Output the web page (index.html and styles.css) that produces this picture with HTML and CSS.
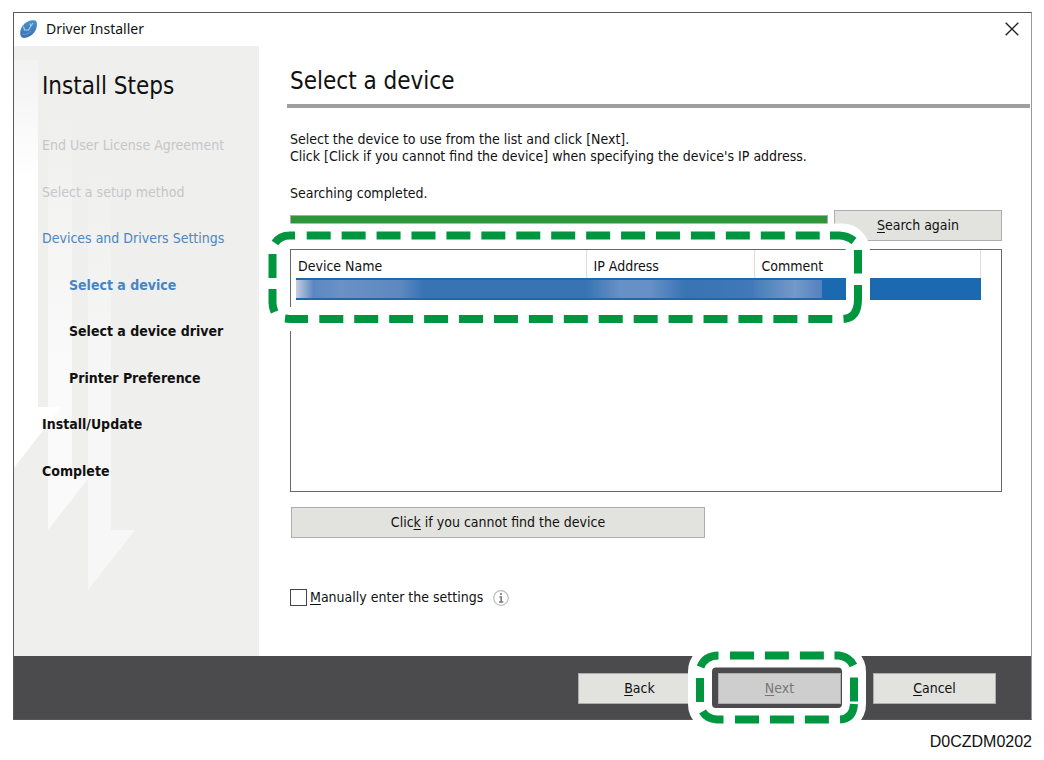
FILE: index.html
```html
<!DOCTYPE html>
<html lang="en">
<head>
<meta charset="utf-8">
<title>Driver Installer</title>
<link rel="stylesheet" href="styles.css">
</head>
<body>
<figure class="figure">
  <div class="window">
    <header class="titlebar">
      <svg class="app-icon" width="20" height="20" viewBox="0 0 20 20" aria-hidden="true">
        <defs><linearGradient id="app" x1="0" y1="0" x2="0" y2="1"><stop offset="0" stop-color="#4692c9"/><stop offset="1" stop-color="#3c6fb8"/></linearGradient></defs>
        <path d="M3 18.500C.500 16.500.600 11 3.500 7C6.500 2.500 12 .700 16 1.500C19 2.500 18.500 9 15.500 13C12.500 17.500 6 20 3 18.500Z" fill="url(#app)"/>
        <path d="M4.500 7.500L5.500 11H9.500L12 7L11 4.500M12 7L14 4" fill="none" stroke="#a9cfea" stroke-width="1.100"/>
        <path d="M3 15Q7 17 12 12" fill="none" stroke="#5f9bd2"/>
      </svg>
      <span class="title">Driver Installer</span>
      <button class="close" type="button" aria-label="Close">
        <svg width="14" height="14" viewBox="0 0 14 14"><path d="M.700.700L13.300 13.300M13.300.700L.700 13.300" stroke="#222" stroke-width="1.400"/></svg>
      </button>
    </header>
    <div class="body">
      <nav class="sidebar">
        <svg class="arrows" width="245" height="610" viewBox="14 46 245 610" aria-hidden="true">
          <defs>
            <linearGradient id="fade1" gradientUnits="userSpaceOnUse" x1="0" y1="60" x2="0" y2="180"><stop offset="0" stop-color="#f2f2f2"/><stop offset="1" stop-color="#fff"/></linearGradient>
            <linearGradient id="fade2" gradientUnits="userSpaceOnUse" x1="0" y1="110" x2="0" y2="360"><stop offset="0" stop-color="#efefee"/><stop offset="1" stop-color="#fafafa"/></linearGradient>
            <linearGradient id="fade3" gradientUnits="userSpaceOnUse" x1="0" y1="160" x2="0" y2="380"><stop offset="0" stop-color="#efefee"/><stop offset="1" stop-color="#f7f7f7"/></linearGradient>
          </defs>
          <path d="M48 110H72V470H95L48 530Z" fill="url(#fade2)"/>
          <path d="M88 160H111V530H135L88 590Z" fill="url(#fade3)"/>
          <path d="M14 60H38V407H61L14 468Z" fill="url(#fade1)"/>
        </svg>
        <h2 class="steps-title">Install Steps</h2>
        <ol class="steps">
          <li class="done">End User License Agreement</li>
          <li class="done">Select a setup method</li>
          <li class="active">Devices and Drivers Settings</li>
          <li class="sub current">Select a device</li>
          <li class="sub">Select a device driver</li>
          <li class="sub">Printer Preference</li>
          <li>Install/Update</li>
          <li>Complete</li>
        </ol>
      </nav>
      <main class="main">
        <h1 class="page-title">Select a device</h1>
        <div class="content">
          <p class="text">Select the device to use from the list and click [Next].<br>Click [Click if you cannot find the device] when specifying the device's IP address.</p>
          <p class="text status" id="status">Searching completed.</p>
          <div class="search">
            <progress class="progress" value="100" max="100" aria-labelledby="status"></progress>
            <button class="button" type="button"><span><u>S</u>earch again</span></button>
          </div>
          <div class="devices">
            <table class="table">
              <colgroup><col class="col-name"><col class="col-ip"><col></colgroup>
              <thead><tr><th>Device Name</th><th>IP Address</th><th>Comment</th></tr></thead>
              <tbody><tr><td><span class="masked name"></span></td><td><span class="masked ip"></span></td><td><span class="masked comment"></span></td></tr></tbody>
            </table>
            <svg class="callout" width="620" height="120" viewBox="256 219 620 120" aria-hidden="true">
              <rect class="halo" x="272.500" y="235.500" width="585.500" height="83.500" rx="16"/>
              <g class="dash">
                <path d="M306.700 235.500H825" stroke-dasharray="24 10.930"/>
                <path d="M830 235.500H839Q847 235.500 854 241"/>
                <path d="M858 250V273.500M858 285V299Q858 318 843.500 319"/>
                <path d="M319.300 319H834" stroke-dasharray="24 10.930"/>
                <path d="M308 319H290L285 318.500"/>
                <path d="M274.500 312Q272.500 307 272.500 303V289M272.500 278V254M275 243Q280 235.500 290 235.500H295"/>
              </g>
            </svg>
          </div>
          <button class="button find" type="button"><span>Clic<u>k</u> if you cannot find the device</span></button>
          <div class="manual">
            <input class="check" type="checkbox" id="manual">
            <label for="manual"><u>M</u>anually enter the settings</label>
            <svg class="info" width="16" height="16" viewBox="0 0 16 16" aria-hidden="true"><circle cx="8" cy="8" r="7.300" fill="none" stroke="#bbb" stroke-width="1.200"/><path d="M8 3V5M6.500 7H8.200V12M6 12H10.300" fill="none" stroke="#777" stroke-width="1.600"/></svg>
          </div>
        </div>
      </main>
    </div>
    <footer class="footer">
      <button class="button" type="button"><span><u>B</u>ack</span></button>
      <div class="next">
        <button class="button" type="button" disabled><span><u>N</u>ext</span></button>
        <svg class="callout" width="186" height="96" viewBox="684 640 186 96" aria-hidden="true">
          <rect class="halo" x="700" y="655.500" width="154" height="64.500" rx="16"/>
          <g class="dash">
            <path d="M700.500 667Q705 655.500 718.500 655.500"/>
            <path d="M730 655.500H824" stroke-dasharray="24 10.930"/>
            <path d="M834.500 655.500H839Q849.500 657 853.500 665.500"/>
            <path d="M854 677.500V701.500M854 704Q853 719 840 719.500"/>
            <path d="M735 719.500H829" stroke-dasharray="24 10.930"/>
            <path d="M723.500 719.500H717Q707 719 702.500 711.500M700 702V678"/>
          </g>
        </svg>
      </div>
      <button class="button cancel" type="button"><span><u>C</u>ancel</span></button>
    </footer>
  </div>
  <figcaption class="caption">D0CZDM0202</figcaption>
</figure>
</body>
</html>
```

FILE: styles.css
```css
* { box-sizing: border-box; }

body {
  margin: 0;
  background: #fff;
  color: #111;
  font: 14px/17px "DejaVu Sans Condensed", "Noto Sans", sans-serif;
}

h1, h2, p, ol { margin: 0; padding: 0; font-weight: 400; }

u { text-underline-offset: 2px; }

.figure { margin: 0; padding: 12px 12px 0 13px; }

.window {
  display: flex;
  flex-direction: column;
  border: 1px solid #58585a;
  border-right-color: #999;
}

.titlebar {
  display: flex;
  align-items: center;
  height: 33px;
  padding: 0 12px 2px 5px;
}

.title {
  flex: 1;
  margin-left: 7px;
  font: 14px/20px "Noto Sans", sans-serif;
}

.close {
  display: flex;
  padding: 0;
  border: 0;
  background: none;
}

.body { display: flex; min-height: 610px; }

.sidebar {
  position: relative;
  flex: 0 0 245px;
  padding: 25px 0 0 28px;
  background: #efefee;
}

.arrows { position: absolute; top: 0; left: 0; }

.steps-title {
  position: relative;
  font-size: 24px;
  line-height: 30px;
}

.steps {
  position: relative;
  display: flex;
  flex-direction: column;
  justify-content: space-between;
  min-height: 346px;
  margin-top: 34px;
  list-style: none;
  font-weight: 700;
  line-height: 20px;
}

.steps .done, .steps .active { font-weight: 400; }
.steps .done { color: #c6c6c8; }
.steps .active { color: #4d86c0; }
.steps .sub { padding-left: 27px; }
.steps .current { color: #4785c3; }

.main { flex: 1; min-width: 0; }

.page-title {
  margin: 0 1px 0 28px;
  padding: 20px 3px 8px;
  border-bottom: 4px solid #9f9f9f;
  font-size: 24px;
  line-height: 30px;
}

.content { padding: 23px 29px 0 31px; }

.status { margin: 20px 0 8px; }

.search { display: flex; gap: 6px; }

.progress {
  flex: 1;
  min-width: 0;
  height: 20px;
  margin: 5px 0 0;
  border: 1px solid #a9a9a9;
  background: #2e9638;
  appearance: none;
}
.progress::-webkit-progress-bar { background: #e6e6e6; }
.progress::-webkit-progress-value { background: #2e9638; }

.button {
  width: 123px;
  height: 31px;
  padding: 0;
  border: 1px solid #adadad;
  background: #e2e3df;
  color: #111;
  font: inherit;
}
.button:disabled { background: #cecece; color: #777; }
.search .button { width: 168px; }

.devices {
  position: relative;
  min-height: 243px;
  margin-top: 8px;
  border: 1px solid #68686a;
}

.table {
  width: calc(100% - 25px);
  margin-left: 5px;
  border-collapse: collapse;
  table-layout: fixed;
}
.col-name { width: 290px; }
.col-ip { width: 168px; }
.table th {
  height: 28px;
  padding: 4px 7px 0;
  border-right: 1px solid #ddd;
  font-weight: 400;
  text-align: left;
}
.table th:first-child { padding-left: 2px; }
.table td { height: 22px; padding: 0; background: #1b69b0; }

.masked { display: block; height: 18px; }
.name { background: linear-gradient(90deg, #c5cfe0, #5b87c2 6%, #6b91c6 15%, #5e88bf 36%, #3873b3 44%); }
.ip { background: linear-gradient(90deg, #3873b3, #6790c6 20%, #6790c6 38%, #3873b3 60%, #4279b8); }
.comment { width: 68px; background: linear-gradient(90deg, #477dba, #7499ca 60%, #5382bf); }

.callout { position: absolute; pointer-events: none; }
.devices .callout { top: -31px; left: -35px; }
.next .callout { top: -33px; left: -34px; }
.halo { fill: none; stroke: #fff; stroke-width: 24px; }
.dash { fill: none; stroke: #009640; stroke-width: 8px; }

.find { width: 414px; margin: 15px 0 0 1px; }

.manual {
  display: flex;
  align-items: center;
  margin-top: 51px;
}
.check {
  width: 17px;
  height: 17px;
  margin: 0 3px 0 0;
  border: 1px solid #444;
  background: #fff;
  appearance: none;
}
.info { margin-left: 10px; }

.footer {
  display: flex;
  justify-content: flex-end;
  padding: 17px 35px 15px 0;
  background: #4b4b4d;
}
.next { position: relative; margin: 0 32px 0 17px; }

.caption {
  padding-top: 12px;
  font: 16px/20px "Liberation Sans", sans-serif;
  text-align: right;
}
```
